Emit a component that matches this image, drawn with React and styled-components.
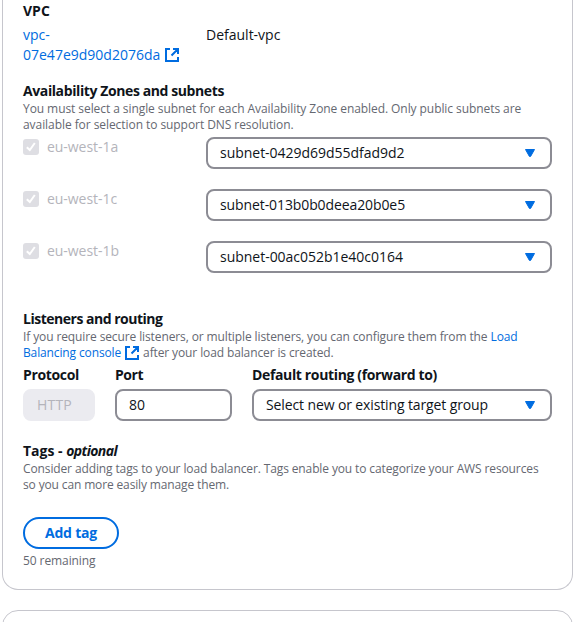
import React from "react";
import styled, { createGlobalStyle } from "styled-components";

const GlobalStyle = createGlobalStyle`
  * { box-sizing: border-box; }
  html, body { margin: 0; background: #fff; overflow: hidden; }
  body {
    font: 400 14px/20px "Open Sans", "Noto Sans", sans-serif;
    color: #0f141a;
  }
`;

const Page = styled.main`
  width: 579px;
  height: 622px;
  overflow: hidden;
  padding: 0 6px 0 2px;
  display: flex;
  flex-direction: column;
  gap: 20px;
`;
const Card = styled.section`
  flex: none;
  border: 1px solid #c6c6cd;
  border-radius: 16px;
  background: #fff;
`;
const MainCard = styled(Card)`
  height: 590px;
  padding: 1px 20px 20px;
  border-top: 0;
  border-radius: 0 0 16px 16px;
`;
const NextCard = styled(Card)`
  height: 60px;
`;
const Section = styled.section`
  margin-top: ${(p) => p.$top || 0}px;
`;
const Spaced = styled.span`
  letter-spacing: ${(p) => p.$ls || 0}px;
`;
const Heading = styled.h3`
  margin: 0;
  font-size: 14px;
  line-height: 20px;
  font-weight: 700;
  white-space: nowrap;
  letter-spacing: ${(p) => p.$ls || 0}px;
`;
const Hint = styled.div`
  font-size: 12px;
  line-height: 16px;
  height: 16px;
  color: #656871;
  white-space: nowrap;
  letter-spacing: ${(p) => p.$ls || 0}px;
`;
const Link = styled.a`
  color: #006ce0;
  text-decoration: none;
  letter-spacing: ${(p) => p.$ls || 0}px;
`;
const Columns = styled.div`
  display: grid;
  grid-template-columns: 163px 346px;
  column-gap: 20px;
`;
const VpcColumns = styled(Columns)`
  margin-top: 4px;
`;
const LinkLine = styled.div`
  display: flex;
  align-items: center;
  height: 20px;
  gap: ${(p) => p.$gap || 0}px;
`;
const SubnetRows = styled.div`
  display: flex;
  flex-direction: column;
  gap: 20px;
  margin-top: 4px;
`;
const ZoneLabel = styled.label`
  display: flex;
  align-items: center;
  gap: 8px;
  height: 20px;
  color: #b4b4bb;
`;
const CheckBox = styled.span`
  display: block;
  width: 16px;
  height: 16px;
  border-radius: 3px;
  background: #dedee3;
  svg { display: block; }
`;
const Control = styled.div`
  display: flex;
  align-items: center;
  justify-content: space-between;
  height: 32px;
  padding: 0 14px 0 12px;
  border: 2px solid ${(p) => (p.$disabled ? "#ebebf0" : "#8c8c94")};
  border-radius: 8px;
  background: ${(p) => (p.$disabled ? "#ebebf0" : "#fff")};
  color: ${(p) => (p.$disabled ? "#b4b4bb" : "#0f141a")};
  white-space: nowrap;
`;
const ListenerGrid = styled.div`
  display: grid;
  grid-template-columns: 72px 117px 300px;
  column-gap: 20px;
  margin-top: 4px;
`;
const Field = styled.div`
  display: flex;
  flex-direction: column;
  gap: 4px;
`;
const AddButton = styled.button`
  display: flex;
  align-items: center;
  justify-content: center;
  width: 96px;
  height: 32px;
  margin: 24px 0 4px;
  padding: 0;
  border: 2px solid #006ce0;
  border-radius: 20px;
  background: #fff;
  color: #006ce0;
  font: 700 14px/20px "Open Sans", "Noto Sans", sans-serif;
  letter-spacing: -0.2px;
`;
const InlineIcon = styled.svg`
  display: inline-block;
  vertical-align: top;
  flex: none;
  margin: 0 ${(p) => p.$gap || 0}px;
`;

const ExternalIcon = ({ gap }) => (
  <InlineIcon $gap={gap} width="16" height="16" viewBox="0 0 16 16" fill="none" stroke="#006ce0" strokeWidth="2">
    <path d="M9 2h5v5M7.5 8.5 14 2M14 10v4H2V2h4" />
  </InlineIcon>
);

const Select = ({ children, ls }) => (
  <Control>
    <Spaced $ls={ls}>{children}</Spaced>
    <svg width="12" height="10" viewBox="0 0 12 10">
      <path d="M1.5 1.5h9L6.6 8.4H5.4z" fill="#006ce0" stroke="#006ce0" strokeWidth="1" strokeLinejoin="round" />
    </svg>
  </Control>
);

const zones = [
  { zone: "eu-west-1a", subnet: "subnet-0429d69d55dfad9d2", ls: -0.026 },
  { zone: "eu-west-1c", subnet: "subnet-013b0b0deea20b0e5", ls: -0.1 },
  { zone: "eu-west-1b", subnet: "subnet-00ac052b1e40c0164", ls: -0.02 },
];

export default function App() {
  return (
    <>
      <GlobalStyle />
      <Page>
        <MainCard>
          <Section>
            <Heading>VPC</Heading>
            <VpcColumns>
              <div>
                <LinkLine><Link href="#">vpc-</Link></LinkLine>
                <LinkLine $gap={4}>
                  <Link href="#">07e47e9d90d2076da</Link>
                  <ExternalIcon />
                </LinkLine>
              </div>
              <span>Default-vpc</span>
            </VpcColumns>
          </Section>

          <Section $top={16}>
            <Heading $ls={-0.4}>Availability Zones and subnets</Heading>
            <Hint $ls={-0.073}>You must select a single subnet for each Availability Zone enabled. Only public subnets are</Hint>
            <Hint $ls={-0.065}>available for selection to support DNS resolution.</Hint>
            <SubnetRows>
              {zones.map(({ zone, subnet, ls }) => (
                <Columns key={zone}>
                  <ZoneLabel>
                    <CheckBox>
                      <svg width="16" height="16" viewBox="0 0 16 16">
                        <path d="M3.8 8.2 6.8 11l5-7" fill="none" stroke="#fff" strokeWidth="2" />
                      </svg>
                    </CheckBox>
                    <Spaced $ls={-0.05}>{zone}</Spaced>
                  </ZoneLabel>
                  <Select ls={ls}>{subnet}</Select>
                </Columns>
              ))}
            </SubnetRows>
          </Section>

          <Section $top={36}>
            <Heading $ls={-0.49}>Listeners and routing</Heading>
            <Hint $ls={-0.114}>
              If you require secure listeners, or multiple listeners, you can configure them from the <Link href="#" $ls={-0.114}>Load</Link>
            </Hint>
            <Hint $ls={-0.118}>
              <Link href="#" $ls={-0.13}>Balancing console</Link>
              <ExternalIcon gap={3} />
              after your load balancer is created.
            </Hint>
            <ListenerGrid>
              <Field>
                <Heading $ls={-0.34}>Protocol</Heading>
                <Control $disabled><Spaced $ls={0.2}>HTTP</Spaced></Control>
              </Field>
              <Field>
                <Heading $ls={-0.45}>Port</Heading>
                <Control><Spaced $ls={0.1}>80</Spaced></Control>
              </Field>
              <Field>
                <Heading $ls={-0.357}>Default routing (forward to)</Heading>
                <Select ls={-0.12}>Select new or existing target group</Select>
              </Field>
            </ListenerGrid>
          </Section>

          <Section $top={20}>
            <Heading>Tags - <Spaced as="em" $ls={-0.6}>optional</Spaced></Heading>
            <Hint $ls={-0.12}>Consider adding tags to your load balancer. Tags enable you to categorize your AWS resources</Hint>
            <Hint $ls={-0.139}>so you can more easily manage them.</Hint>
            <AddButton type="button">Add tag</AddButton>
            <Hint $ls={-0.088}>50 remaining</Hint>
          </Section>
        </MainCard>
        <NextCard />
      </Page>
    </>
  );
}
